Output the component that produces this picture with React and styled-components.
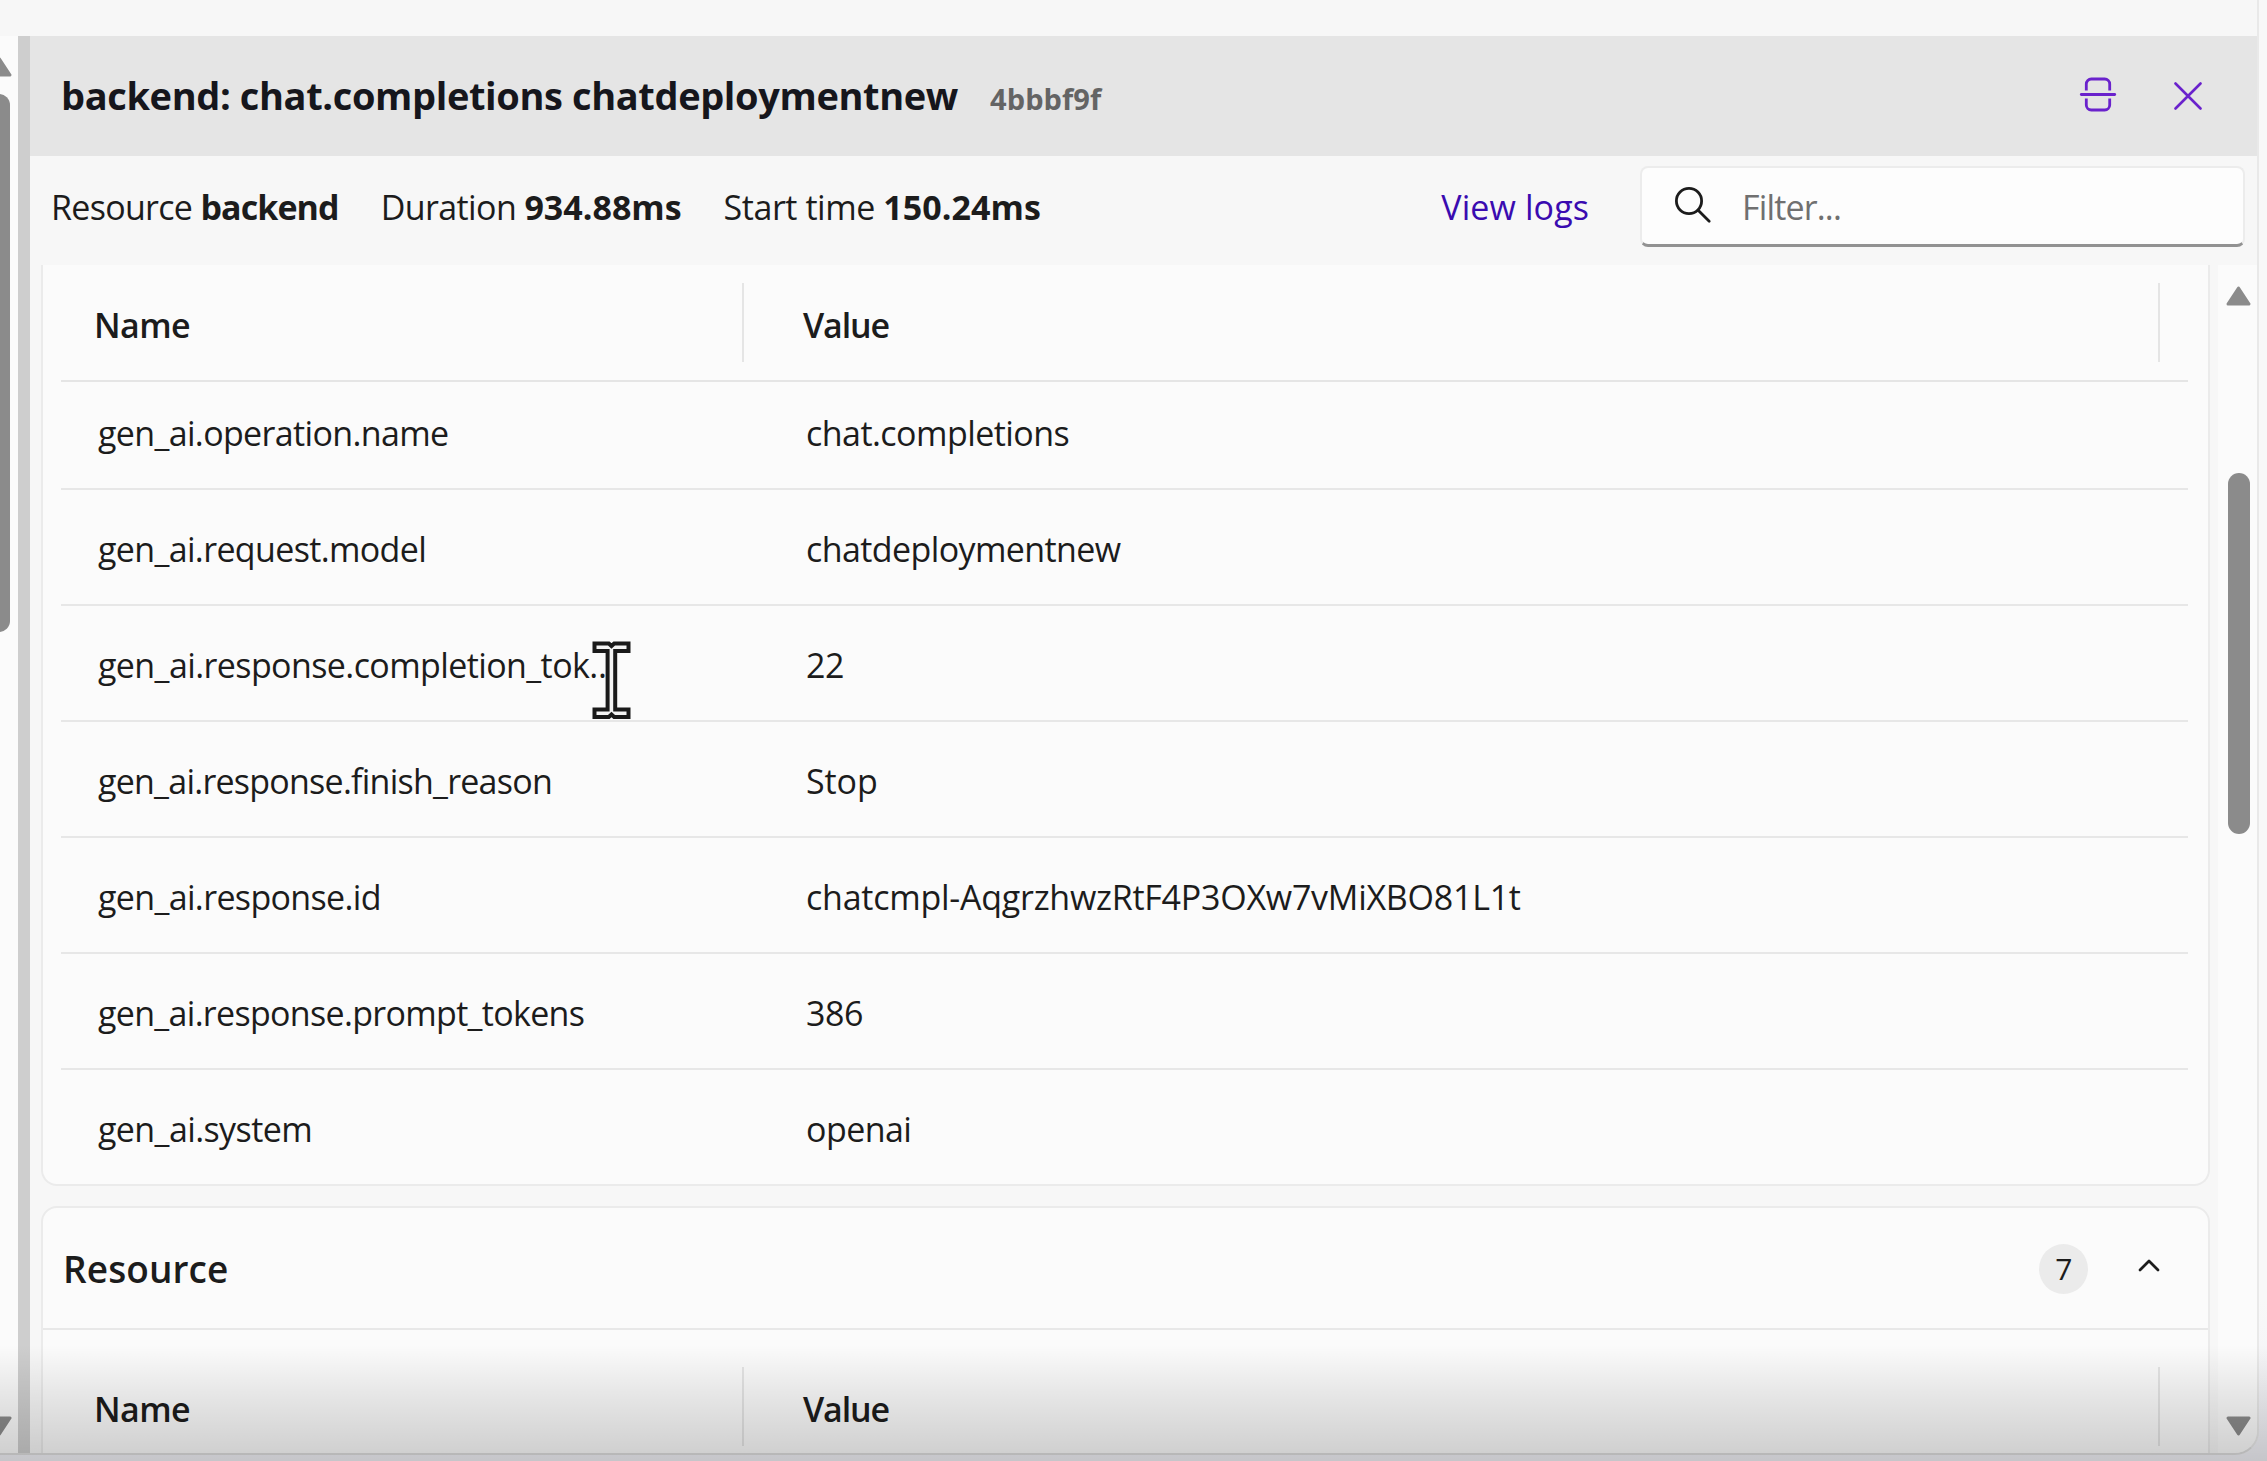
import React from "react";
import styled, { createGlobalStyle } from "styled-components";

const GlobalStyle = createGlobalStyle`
  *, *::before, *::after { box-sizing: border-box; }
  body {
    margin: 0;
    background: #f8f8f8;
    font-family: "Open Sans", "Noto Sans", sans-serif;
    font-size: 34px;
    letter-spacing: -0.6px;
    line-height: 1.36;
    color: #1c1c1c;
  }
  svg { display: block; flex: none; }
`;

const Desktop = styled.div`
  position: relative;
  width: 2267px;
  height: 1461px;
  overflow: hidden;
  background: linear-gradient(#f8f8f8 1300px, #f2f2f7 1440px);
`;

const WindowFrame = styled.div`
  width: 2259px;
  height: 1455px;
  display: flex;
  flex-direction: column;
  padding-top: 36px;
  overflow: hidden;
  background: #f7f7f7;
  border-right: 2px solid #e9e9e9;
  border-bottom: 2px solid #dedede;
  border-bottom-right-radius: 24px;
`;

const SplitView = styled.div`
  flex: 1;
  min-height: 0;
  display: flex;
`;

const Splitter = styled.div`
  width: 12px;
  background: #cecece;
`;

const DetailsPanel = styled.section`
  flex: 1;
  min-width: 0;
  display: flex;
  flex-direction: column;
`;

const ScrollTrack = styled.div`
  flex: none;
  display: flex;
  flex-direction: column;
  width: ${(p) => p.$width}px;
  padding: 21px 0 17px ${(p) => p.$inset}px;
  overflow: hidden;
  background: #fbfbfb;
`;

const LeftBarColumn = styled.div`
  flex: 1;
  display: flex;
  flex-direction: column;
  margin-left: -13.5px;
`;

const ScrollThumb = styled.div`
  flex: none;
  width: 22px;
  height: ${(p) => p.$length}px;
  margin: ${(p) => p.$top}px 0 auto 1.5px;
  border-radius: 11px;
  background: #8b8b8b;
`;

const PanelHeader = styled.header`
  flex: none;
  height: 120px;
  display: flex;
  align-items: center;
  padding: 0 55px 0 31px;
  background: #e5e5e5;
`;

const TitleGroup = styled.div`
  flex: 1;
  display: flex;
  align-items: baseline;
  gap: 32px;
`;

const Title = styled.h1`
  margin: 0;
  font-size: 38px;
  font-weight: 700;
  letter-spacing: -0.38px;
  color: #16161c;
`;

const SpanId = styled.span`
  font-size: 29px;
  font-weight: 700;
  letter-spacing: 0.1px;
  color: #646464;
`;

const HeaderActions = styled.div`
  display: flex;
  align-items: center;
  gap: 57px;
  color: #6a22cc;
`;

const Toolbar = styled.div`
  flex: none;
  height: 109px;
  display: flex;
  align-items: center;
  padding: 0 12px 9px 21px;
`;

const Facts = styled.div`
  flex: 1;
  display: flex;
  gap: 42px;
  padding-top: 3px;
  white-space: nowrap;
`;

const Fact = styled.span`
  letter-spacing: ${(p) => p.$tracking}px;
`;

const FactValue = styled.strong`
  font-weight: 700;
  letter-spacing: ${(p) => p.$tracking || 0}px;
`;

const LogsLink = styled.a`
  margin-right: 51px;
  padding-top: 3px;
  letter-spacing: 0.1px;
  color: #3a0bb0;
`;

const FilterBox = styled.label`
  width: 605px;
  height: 81px;
  display: flex;
  align-items: center;
  gap: 30px;
  padding-left: 32px;
  background: #fdfdfd;
  border: 2px solid #ececec;
  border-bottom: 3px solid #929292;
  border-radius: 8px;
`;

const FilterHint = styled.span`
  padding-top: 4px;
  letter-spacing: -0.85px;
  color: #707070;
`;

const PanelBody = styled.div`
  flex: 1;
  min-height: 0;
  display: flex;
`;

const CardStack = styled.div`
  flex: 1;
  min-width: 0;
  display: flex;
  flex-direction: column;
  gap: 20px;
  padding: 0 8px 0 11px;
  overflow: hidden;
`;

const Card = styled.div`
  flex: none;
  background: #fbfbfb;
  border: 2px solid #ebebeb;
  border-top-width: ${(p) => (p.$scrolled ? 0 : 2)}px;
  border-radius: ${(p) => (p.$scrolled ? "0 0 16px 16px" : "16px 16px 0 0")};
`;

const CardHeader = styled.div`
  height: 122px;
  display: flex;
  align-items: center;
  padding: 2px 48px 0 20px;
  border-bottom: 2px solid #e8e8e8;
`;

const CardTitle = styled.h2`
  flex: 1;
  margin: 0;
  padding-top: 1px;
  font-size: 37px;
  font-weight: 600;
  letter-spacing: 0.1px;
`;

const CountBadge = styled.span`
  width: 49px;
  height: 50px;
  display: grid;
  place-items: center;
  margin-right: 50px;
  border-radius: 50%;
  background: #ebebeb;
  font-size: 30px;
`;

const ChevronSlot = styled.span`
  padding-bottom: 8px;
`;

const Table = styled.div`
  margin: 0 20px 0 18px;
`;

const TableHead = styled.div`
  position: relative;
  z-index: 1;
  height: ${(p) => p.$height}px;
  display: flex;
  align-items: center;
  background: #fbfbfb;
  border-bottom: 2px solid #e5e5e5;
`;

const HeadCell = styled.div`
  width: ${(p) => p.$width}px;
  height: 79px;
  display: flex;
  align-items: center;
  padding: 6px 0 0 ${(p) => p.$indent}px;
  border-right: 2px solid #e5e5e5;
  font-weight: 600;
  letter-spacing: ${(p) => p.$tracking}px;
`;

const TableBody = styled.div`
  margin-top: -8px;
`;

const TableRow = styled.div`
  height: 116px;
  display: grid;
  grid-template-columns: 683px 1fr;
  align-items: center;
  padding-top: 5px;
  border-bottom: 2px solid #e7e7e7;

  &:last-child {
    height: 114px;
    border-bottom: 0;
  }
`;

const NameCell = styled.div`
  width: 557px;
  padding-left: 37px;
  overflow: hidden;
  text-overflow: ellipsis;
  white-space: nowrap;
  letter-spacing: ${(p) => p.$tracking}px;
`;

const ValueCell = styled.div`
  padding-left: 62px;
  white-space: nowrap;
  letter-spacing: ${(p) => p.$tracking}px;
`;

const BottomShade = styled.div`
  position: absolute;
  z-index: 2;
  left: 0;
  right: 0;
  bottom: 0;
  height: 116px;
  background: linear-gradient(rgba(0, 0, 0, 0), rgba(0, 0, 0, 0.08) 40%, rgba(0, 0, 0, 0.185));
  pointer-events: none;
`;

const TextCursor = styled.svg`
  position: absolute;
  z-index: 3;
  left: 592px;
  top: 641px;
`;

const attributes = [
  { name: "gen_ai.operation.name", nameTracking: -0.65, value: "chat.completions", tracking: -0.55 },
  { name: "gen_ai.request.model", nameTracking: -0.65, value: "chatdeploymentnew", tracking: -0.6 },
  { name: "gen_ai.response.completion_tokens", nameTracking: -0.6, value: "22", tracking: -0.5 },
  { name: "gen_ai.response.finish_reason", nameTracking: -0.76, value: "Stop", tracking: -0.1 },
  { name: "gen_ai.response.id", nameTracking: -0.65, value: "chatcmpl-AqgrzhwzRtF4P3OXw7vMiXBO81L1t", tracking: -0.25 },
  { name: "gen_ai.response.prompt_tokens", nameTracking: -0.69, value: "386", tracking: -0.4 },
  { name: "gen_ai.system", nameTracking: -0.6, value: "openai", tracking: -0.55 },
];

const ArrowUp = () => (
  <svg width="25" height="20" viewBox="0 0 25 20">
    <path d="M12.5 2 23 18H2Z" fill="#8b8b8b" stroke="#8b8b8b" strokeWidth="3" strokeLinejoin="round" />
  </svg>
);

const ArrowDown = () => (
  <svg width="25" height="20" viewBox="0 0 25 20">
    <path d="M12.5 18 23 2H2Z" fill="#8b8b8b" stroke="#8b8b8b" strokeWidth="3" strokeLinejoin="round" />
  </svg>
);

const SplitIcon = () => (
  <svg width="38" height="38" viewBox="0 0 38 38" fill="none" stroke="currentColor" strokeWidth="2.8">
    <path d="M7.3 13.5V7a5 5 0 0 1 5-5h13.4a5 5 0 0 1 5 5v6.5" />
    <path d="M7.3 21.5V28a5 5 0 0 0 5 5h13.4a5 5 0 0 0 5-5v-6.5" />
    <path d="M2.3 17.5h33.4" strokeLinecap="round" />
  </svg>
);

const CloseIcon = () => (
  <svg width="28" height="28" viewBox="0 0 28 28" fill="none" stroke="currentColor" strokeWidth="2.6" strokeLinecap="round">
    <path d="M1.5 1.5l25 25M26.5 1.5l-25 25" />
  </svg>
);

const SearchIcon = () => (
  <svg width="38" height="38" viewBox="0 0 38 38" fill="none" stroke="#1c1c1c" strokeWidth="2.8" strokeLinecap="round">
    <circle cx="15" cy="14" r="12.6" />
    <path d="M24.2 23.2 35.2 34.2" />
  </svg>
);

const ChevronUp = () => (
  <svg width="22" height="13" viewBox="0 0 22 13" fill="none" stroke="#1c1c1c" strokeWidth="2.8" strokeLinecap="round" strokeLinejoin="round">
    <path d="M2 11 11 2l9 9" />
  </svg>
);

const ColumnHeads = ({ height }) => (
  <TableHead $height={height}>
    <HeadCell $width={683} $indent={33} $tracking={-0.6}>Name</HeadCell>
    <HeadCell $width={1416} $indent={59} $tracking={-1.1}>Value</HeadCell>
  </TableHead>
);

export default function App() {
  return (
    <Desktop>
      <GlobalStyle />
      <WindowFrame>
        <SplitView>
          <ScrollTrack $width={18} $inset={0}>
            <LeftBarColumn>
              <ArrowUp />
              <ScrollThumb $length={538} $top={17} />
              <ArrowDown />
            </LeftBarColumn>
          </ScrollTrack>
          <Splitter />
          <DetailsPanel>
            <PanelHeader>
              <TitleGroup>
                <Title>backend: chat.completions chatdeploymentnew</Title>
                <SpanId>4bbbf9f</SpanId>
              </TitleGroup>
              <HeaderActions>
                <SplitIcon />
                <CloseIcon />
              </HeaderActions>
            </PanelHeader>
            <Toolbar>
              <Facts>
                <Fact $tracking={-0.7}>Resource <FactValue $tracking={-0.9}>backend</FactValue></Fact>
                <Fact $tracking={-0.6}>Duration <FactValue>934.88ms</FactValue></Fact>
                <Fact $tracking={-0.45}>Start time <FactValue $tracking={0.05}>150.24ms</FactValue></Fact>
              </Facts>
              <LogsLink>View logs</LogsLink>
              <FilterBox>
                <SearchIcon />
                <FilterHint>Filter...</FilterHint>
              </FilterBox>
            </Toolbar>
            <PanelBody>
              <CardStack>
                <Card $scrolled>
                  <Table>
                    <ColumnHeads height={117} />
                    <TableBody>
                      {attributes.map((row) => (
                        <TableRow key={row.name}>
                          <NameCell $tracking={row.nameTracking}>{row.name}</NameCell>
                          <ValueCell $tracking={row.tracking}>{row.value}</ValueCell>
                        </TableRow>
                      ))}
                    </TableBody>
                  </Table>
                </Card>
                <Card>
                  <CardHeader>
                    <CardTitle>Resource</CardTitle>
                    <CountBadge>7</CountBadge>
                    <ChevronSlot><ChevronUp /></ChevronSlot>
                  </CardHeader>
                  <Table>
                    <ColumnHeads height={154} />
                  </Table>
                </Card>
              </CardStack>
              <ScrollTrack $width={39} $inset={8}>
                <ArrowUp />
                <ScrollThumb $length={361} $top={167} />
                <ArrowDown />
              </ScrollTrack>
            </PanelBody>
          </DetailsPanel>
        </SplitView>
      </WindowFrame>
      <BottomShade />
      <TextCursor width="39" height="79" viewBox="0 0 39 79">
        <path
          d="M2.5 2.5H16.8L19.5 5l2.7-2.5H36.5V10H23.2V68.5H36.5V76H22.2l-2.7-2.5L16.8 76H2.5V68.5H15.6V10H2.5Z"
          fill="#f4f4f4"
          stroke="#1a1a1a"
          strokeWidth="4"
          strokeLinejoin="miter"
        />
      </TextCursor>
    </Desktop>
  );
}
